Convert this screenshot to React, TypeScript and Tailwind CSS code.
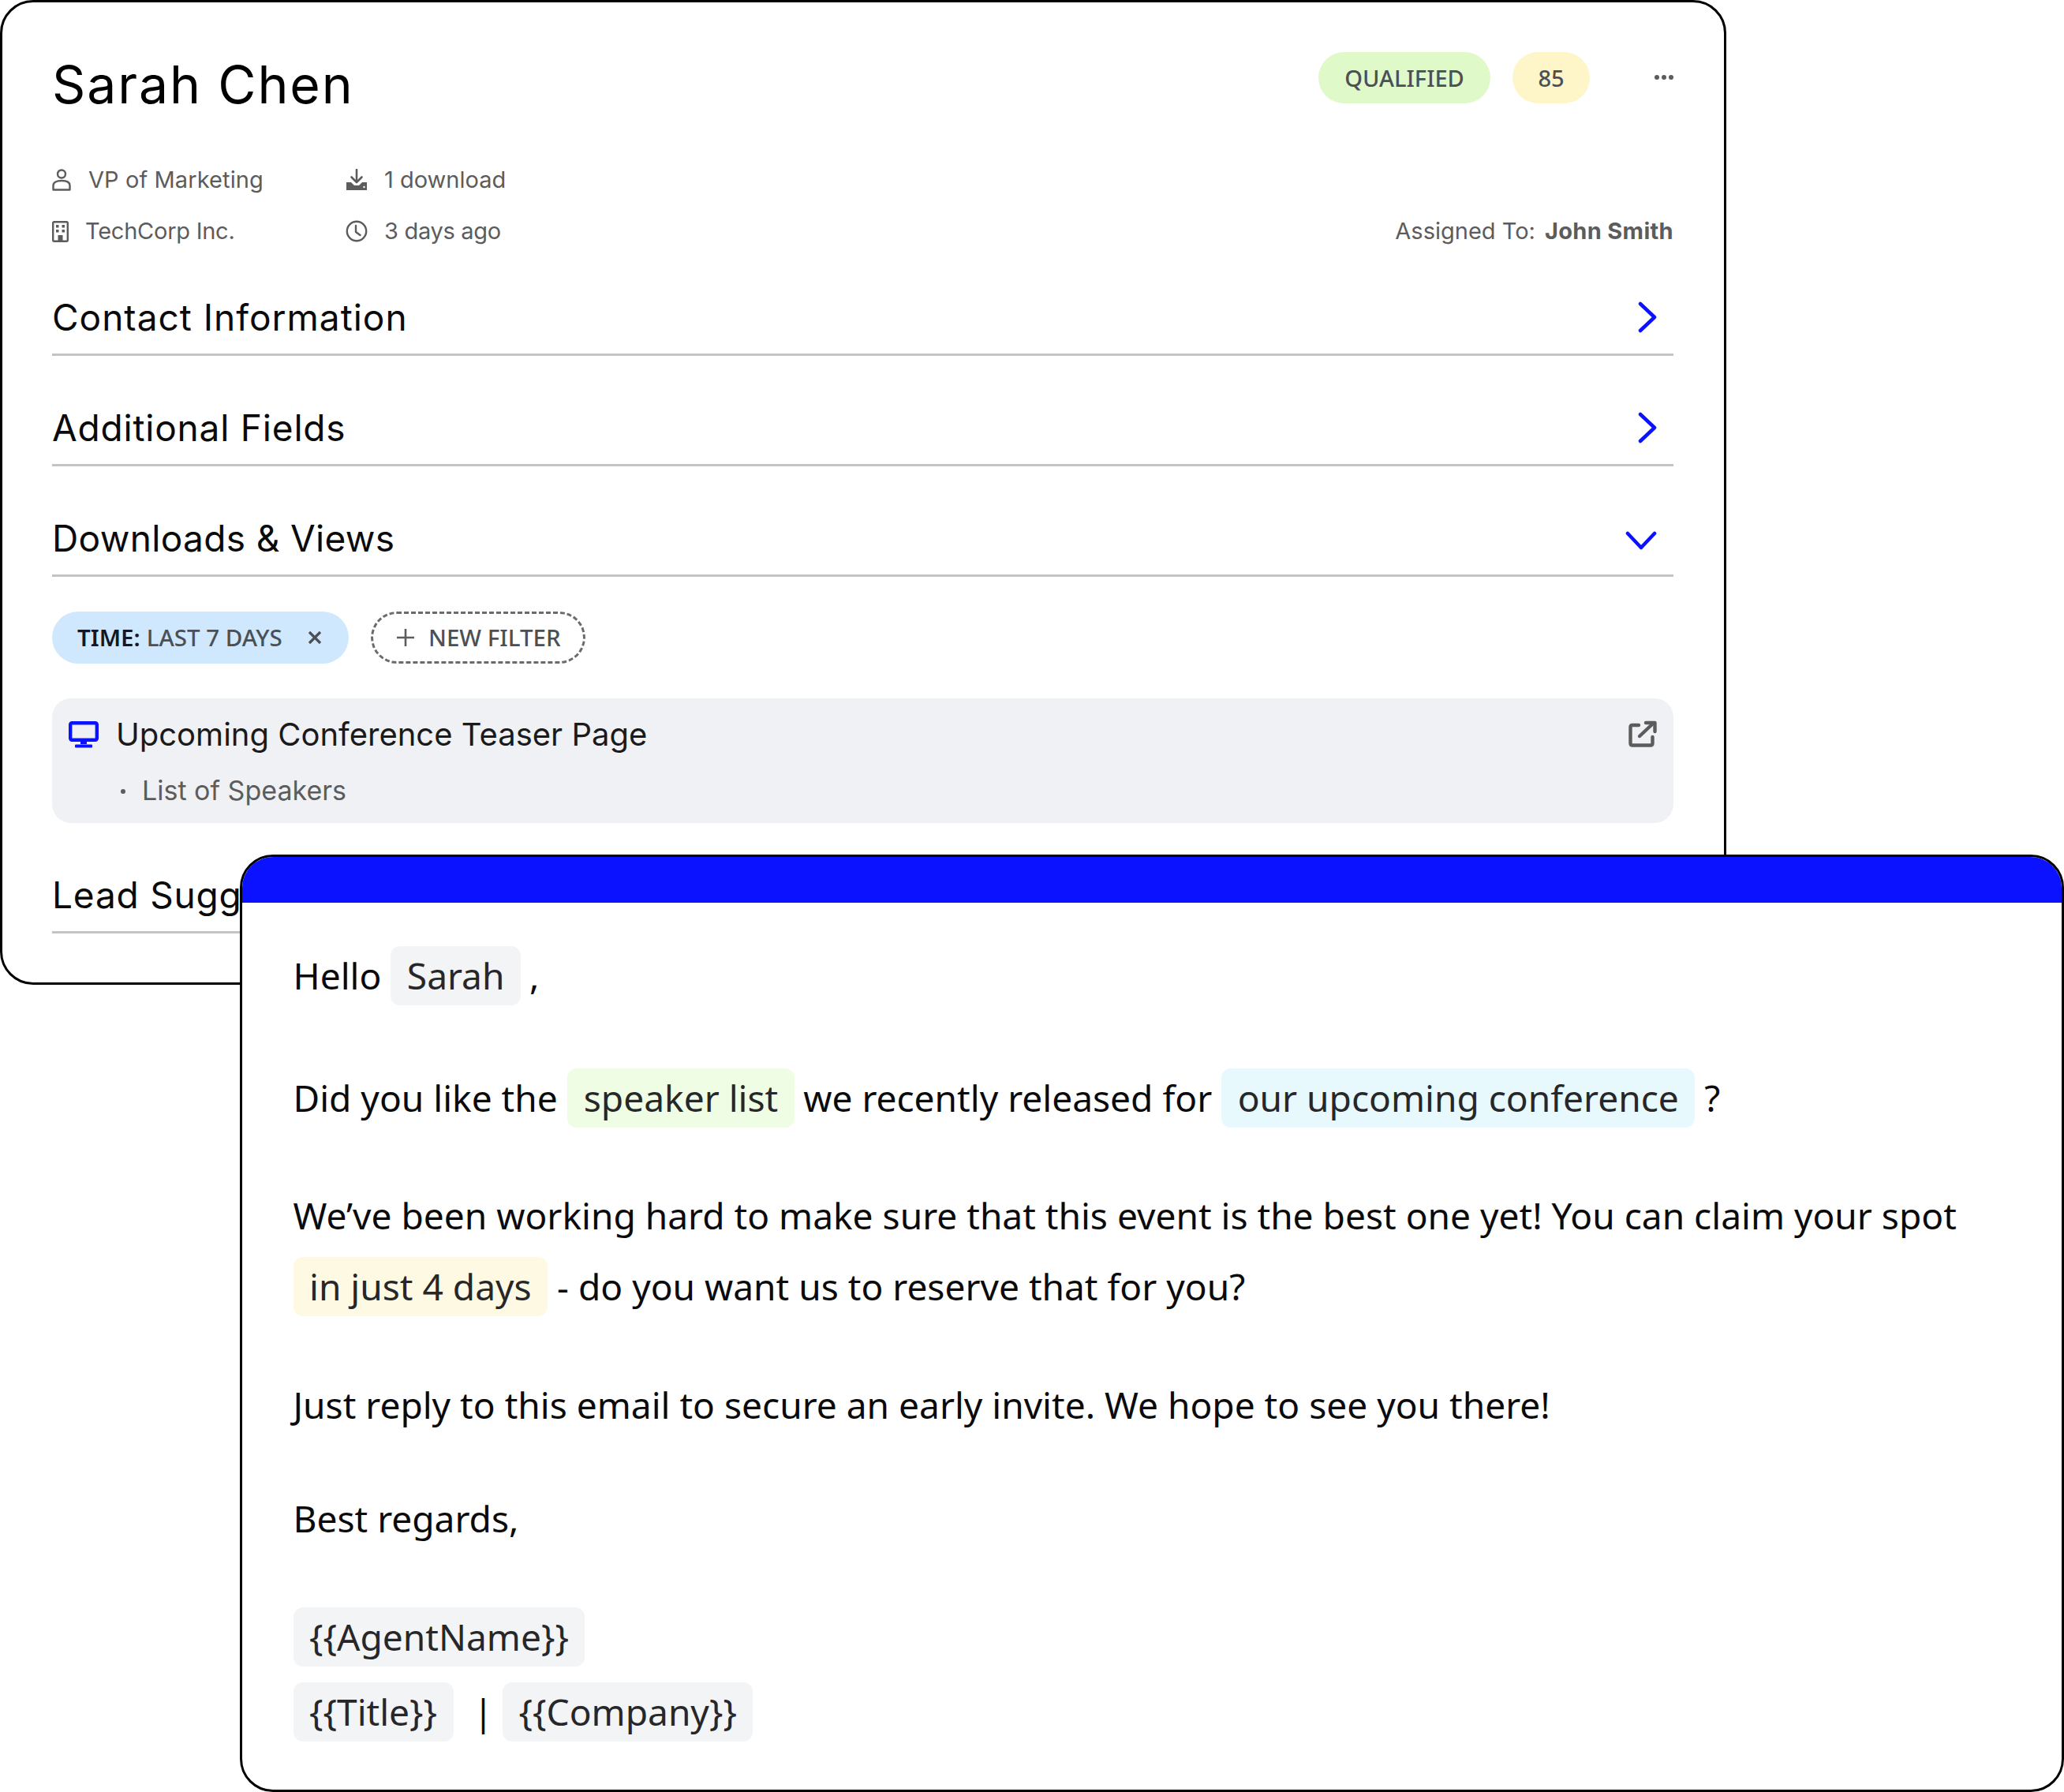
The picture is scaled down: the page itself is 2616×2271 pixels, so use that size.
import React from "react";

const Chevron = ({ down }: { down?: boolean }) =>
  down ? (
    <svg width="40" height="24" viewBox="0 0 40 24" className="mt-[7px]">
      <path d="M3 3 L20 21 L37 3" fill="none" stroke="#0a12ff" strokeWidth="4.5" strokeLinecap="round" strokeLinejoin="round" />
    </svg>
  ) : (
    <svg width="24" height="40" viewBox="0 0 24 40" className="mt-[1px]">
      <path d="M3 3 L21 20 L3 37" fill="none" stroke="#0a12ff" strokeWidth="4.5" strokeLinecap="round" strokeLinejoin="round" />
    </svg>
  );

const Person = () => (
  <svg width="24" height="28" viewBox="0 0 24 28" fill="none" stroke="#5c5c5c" strokeWidth="2.4">
    <circle cx="12" cy="6.5" r="5" />
    <path d="M1.5 26.5 V21 C1.5 17 6 15 12 15 C18 15 22.5 17 22.5 21 V26.5 Z" strokeLinejoin="round" />
  </svg>
);
const Download = () => (
  <svg width="28" height="28" viewBox="0 0 28 28" fill="none">
    <path d="M14 1 V16" stroke="#5c5c5c" strokeWidth="2.6" strokeLinecap="round" />
    <path d="M7.5 10.5 L14 17 L20.5 10.5" stroke="#5c5c5c" strokeWidth="2.6" strokeLinecap="round" strokeLinejoin="round" />
    <path d="M1 17 H7 L11 21 H17 L21 17 H27 V27 H1 Z" fill="#5c5c5c" />
    <circle cx="23.5" cy="23" r="1.2" fill="#fff" />
  </svg>
);
const Building = () => (
  <svg width="21" height="27" viewBox="0 0 21 27" fill="none">
    <rect x="1.2" y="1.2" width="18.6" height="24.6" rx="1.5" stroke="#5c5c5c" strokeWidth="2.4" />
    <rect x="5" y="5" width="3.5" height="3.5" fill="#5c5c5c" />
    <rect x="12.5" y="5" width="3.5" height="3.5" fill="#5c5c5c" />
    <rect x="5" y="11" width="3.5" height="3.5" fill="#5c5c5c" />
    <rect x="12.5" y="11" width="3.5" height="3.5" fill="#5c5c5c" />
    <rect x="7.5" y="18" width="6" height="8" fill="#5c5c5c" />
  </svg>
);
const Clock = () => (
  <svg width="28" height="28" viewBox="0 0 28 28" fill="none" stroke="#5c5c5c" strokeWidth="2.4" strokeLinecap="round" strokeLinejoin="round">
    <circle cx="14" cy="14" r="12.2" />
    <path d="M13 7 V15 L18.5 19" />
  </svg>
);
const Monitor = () => (
  <svg width="38" height="34" viewBox="0 0 38 34" fill="none">
    <rect x="2.2" y="2.2" width="33.6" height="21.6" rx="2" stroke="#0a12ff" strokeWidth="4.4" />
    <path d="M15 25 H23 V29 H15 Z" fill="#0a12ff" />
    <rect x="8" y="29.5" width="22" height="4" rx="1" fill="#0a12ff" />
  </svg>
);
const External = () => (
  <svg width="36" height="34" viewBox="0 0 36 34" fill="none" stroke="#5c5c5c" strokeWidth="4.4" strokeLinecap="round" strokeLinejoin="round">
    <path d="M13 6 H5 Q2.5 6 2.5 8.5 V29 Q2.5 31.5 5 31.5 H28 Q30.5 31.5 30.5 29 V21" />
    <path d="M14 20 L31 4" />
    <path d="M22 3 H33.5 V14" />
  </svg>
);

const Section = ({ title, down, cls, tracking }: { title: string; down?: boolean; cls: string; tracking: string }) => (
  <div className={`flex items-center justify-between h-[97px] border-b-[3px] border-[#c4c4c4] ${cls}`}>
    <span className={`pt-[2px] font-['Inter',sans-serif] text-[46px] text-[#0a0a0a] whitespace-nowrap ${tracking}`}>{title}</span>
    <span className="mr-[21px] flex">
      <Chevron down={down} />
    </span>
  </div>
);

const Chip = ({ children, cls }: { children: React.ReactNode; cls: string }) => (
  <span className={`h-[75px] flex items-center px-[20.5px] rounded-[12px] text-[#27272a] whitespace-nowrap ${cls}`}>{children}</span>
);

const Meta = ({ icon, text, iconW, cls }: { icon: React.ReactNode; text: string; iconW: string; cls?: string }) => (
  <div className="flex items-center h-[40px]">
    <span className={`flex ${iconW}`}>{icon}</span>
    <span className={`font-['Inter',sans-serif] text-[29px] text-[#5c5c5c] whitespace-nowrap ${cls ?? ""}`}>{text}</span>
  </div>
);

export default function App() {
  return (
    <div className="relative w-[2616px] h-[2271px] bg-white overflow-hidden font-['Noto_Sans',sans-serif]">
      <div className="box-border w-[2188px] h-[1248px] border-[3px] border-black rounded-[42px] bg-white pl-[63px] pr-[64px] pt-[63px]">
        <div className="flex items-start justify-between h-[83px]">
          <span className="font-['Inter',sans-serif] text-[66px] tracking-[1.9px] leading-[83px] text-black whitespace-nowrap">Sarah Chen</span>
          <div className="flex items-start">
            <span className="h-[65px] w-[218px] flex items-center justify-center rounded-full bg-[#dff9c9] text-[#4b5056] text-[29px] font-medium">QUALIFIED</span>
            <span className="h-[65px] w-[98px] ml-[28px] flex items-center justify-center rounded-full bg-[#fef5c8] text-[#4b5056] text-[29px] font-medium">85</span>
            <span className="flex gap-[3px] h-[65px] items-center ml-[82px] pb-[1px]">
              <span className="w-[6px] h-[6px] rounded-full bg-[#5c5c5c]" />
              <span className="w-[6px] h-[6px] rounded-full bg-[#5c5c5c]" />
              <span className="w-[6px] h-[6px] rounded-full bg-[#5c5c5c]" />
            </span>
          </div>
        </div>

        <div className="mt-[59px] flex justify-between items-end">
          <div className="flex">
            <div className="flex flex-col gap-[25px] w-[372px]">
              <Meta icon={<Person />} text="VP of Marketing" iconW="w-[46px]" cls="tracking-[0.1px]" />
              <Meta icon={<Building />} text="TechCorp Inc." iconW="w-[42px]" cls="tracking-[-0.25px]" />
            </div>
            <div className="flex flex-col gap-[25px]">
              <Meta icon={<Download />} text="1 download" iconW="w-[49px]" />
              <Meta icon={<Clock />} text="3 days ago" iconW="w-[49px]" cls="tracking-[-0.3px]" />
            </div>
          </div>
          <div className="flex items-center h-[40px] font-['Inter',sans-serif] text-[29px] text-[#5c5c5c] whitespace-nowrap">
            <span>Assigned To:</span>
            <span className="ml-[12px] font-bold tracking-[0.33px]">John Smith</span>
          </div>
        </div>

        <Section title="Contact Information" cls="mt-[41px]" tracking="tracking-[1px]" />
        <Section title="Additional Fields" cls="mt-[43px]" tracking="tracking-[0.8px]" />
        <Section title="Downloads & Views" down cls="mt-[43px]" tracking="tracking-[0.35px]" />

        <div className="flex mt-[44px] h-[66px]">
          <div className="w-[376px] h-[66px] rounded-full bg-[#cfe8fe] flex items-center pl-[32px] text-[29.5px] font-medium text-[#4b5056] whitespace-nowrap">
            <span className="text-[#111827] font-semibold">TIME:</span>
            <span className="ml-[8px]">LAST 7 DAYS</span>
            <svg width="18" height="18" viewBox="0 0 18 18" className="ml-[32px]" fill="none" stroke="#4b5056" strokeWidth="3.2">
              <path d="M2 2 L16 16 M16 2 L2 16" />
            </svg>
          </div>
          <div className="ml-[28px] w-[272px] h-[66px] box-border rounded-full border-[3px] border-dashed border-[#6b6b6b] flex items-center pl-[29px] text-[29.5px] font-medium text-[#4b5056] whitespace-nowrap">
            <svg width="24" height="24" viewBox="0 0 24 24" fill="none" stroke="#5c5c5c" strokeWidth="2.6">
              <path d="M12 1 V23 M1 12 H23" />
            </svg>
            <span className="ml-[17px]">NEW FILTER</span>
          </div>
        </div>

        <div className="mt-[44px] h-[158px] rounded-[24px] bg-[#f0f1f5] px-[21px] pt-[26px] flex justify-between items-start">
          <div>
            <div className="flex items-center h-[40px]">
              <span className="flex w-[60px]"><Monitor /></span>
              <span className="font-['Inter',sans-serif] text-[40px] text-[#1a1a1a] whitespace-nowrap">Upcoming Conference Teaser Page</span>
            </div>
            <div className="flex items-center h-[40px] mt-[30px] ml-[66px]">
              <span className="w-[6px] h-[6px] rounded-full bg-[#5c5c5c] mt-[4px]" />
              <span className="ml-[21px] font-['Inter',sans-serif] text-[34px] text-[#5c5c5c] whitespace-nowrap">List of Speakers</span>
            </div>
          </div>
          <span className="flex mt-[2px]"><External /></span>
        </div>

        <Section title="Lead Suggestions" cls="mt-[43px]" tracking="tracking-[0.8px]" />
      </div>

      <div className="absolute left-[304px] top-[1083px] box-border w-[2312px] h-[1188px] border-[3px] border-black rounded-[42px] bg-white overflow-hidden">
        <div className="h-[58px] bg-[#0a12ff]" />
        <div className="pl-[64.5px] text-[46.1px] text-[#0a0a0a]">
          <div className="mt-[55px] flex items-center h-[75px] whitespace-nowrap">
            <span>Hello</span>
            <Chip cls="bg-[#f3f4f6] ml-[12px]">Sarah</Chip>
            <span className="ml-[11px]">,</span>
          </div>
          <div className="mt-[80px] flex items-center h-[75px] whitespace-nowrap">
            <span>Did you like the</span>
            <Chip cls="bg-[#eefde3] ml-[12.5px]">speaker list</Chip>
            <span className="ml-[11.5px]">we recently released for</span>
            <Chip cls="bg-[#e8f9fd] ml-[12px]">our upcoming conference</Chip>
            <span className="ml-[12px]">?</span>
          </div>
          <div className="mt-[74px] flex items-center h-[75px] whitespace-nowrap">
            We’ve been working hard to make sure that this event is the best one yet! You can claim your spot
          </div>
          <div className="mt-[15px] flex items-center h-[75px] whitespace-nowrap">
            <Chip cls="bg-[#fef9e3]">in just 4 days</Chip>
            <span className="ml-[12px]">- do you want us to reserve that for you?</span>
          </div>
          <div className="mt-[75px] flex items-center h-[75px] whitespace-nowrap">
            Just reply to this email to secure an early invite. We hope to see you there!
          </div>
          <div className="mt-[69px] flex items-center h-[75px] whitespace-nowrap">Best regards,</div>
          <div className="mt-[75px] flex items-center h-[75px]">
            <Chip cls="bg-[#f3f4f6]">{"{{AgentName}}"}</Chip>
          </div>
          <div className="mt-[20px] flex items-center h-[75px]">
            <Chip cls="bg-[#f3f4f6]">{"{{Title}}"}</Chip>
            <span className="ml-[25px]">|</span>
            <Chip cls="bg-[#f3f4f6] ml-[12px]">{"{{Company}}"}</Chip>
          </div>
        </div>
      </div>
    </div>
  );
}
